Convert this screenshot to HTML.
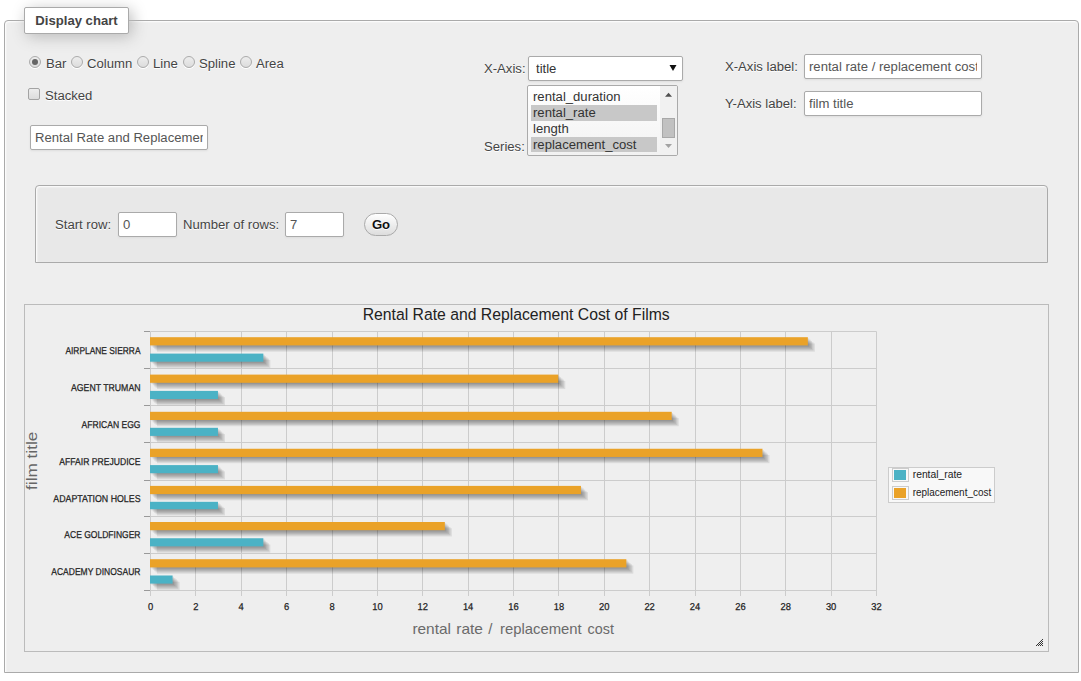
<!DOCTYPE html>
<html lang="en">
<head>
<meta charset="utf-8">
<title>Display chart</title>
<style>
html,body{margin:0;padding:0;background:#fff;}
body{width:1081px;height:681px;position:relative;overflow:hidden;font-family:"Liberation Sans",Arial,sans-serif;font-size:13.12px;color:#444;}
.a{position:absolute;white-space:nowrap;}
.fs{left:4px;top:20px;width:1073px;height:651px;border:1px solid #aaa;border-radius:4px 4px 0 0;background:#eee;box-shadow:inset 1px 1px 2px #fff;}
.lg{left:24px;top:7px;width:103px;height:25px;border:1px solid #aaa;border-radius:2px;background:#fff;box-shadow:3px 3px 15px #bbb;font-weight:bold;line-height:25px;text-align:center;color:#444;}
.t{line-height:16px;height:16px;text-shadow:0 1px 0 #fff;}
.inp{box-sizing:border-box;height:24px;border:1px solid #aaa;border-radius:2px;background:#fff;color:#555;line-height:22px;padding:0 4px;box-shadow:0 1px 2px #ddd;}
.inp>span{display:block;overflow:hidden;white-space:nowrap;height:100%;}
.radio{box-sizing:border-box;width:12px;height:12px;border-radius:50%;border:1px solid #ababab;background:linear-gradient(#ededed,#dcdcdc);box-shadow:0 1px 0 #fff;}
.radio.on::after{content:"";position:absolute;left:2px;top:2px;width:6px;height:6px;border-radius:50%;background:#666;}
.cb{box-sizing:border-box;width:12px;height:12px;border-radius:2px;border:1px solid #a3a3a3;background:linear-gradient(#ededed,#dcdcdc);}
.ifs{left:35px;top:185px;width:1011px;height:76px;border:1px solid #aaa;border-radius:4px 4px 0 0;background:#e8e8e8;box-shadow:inset 1px 1px 2px #fff;}
.go{box-sizing:border-box;left:364px;top:213px;width:34px;height:23px;border:1px solid #aaa;border-radius:12px;background:linear-gradient(#fff,#ddd);color:#111;font-weight:bold;text-align:center;line-height:21px;text-shadow:0 1px 0 #fff;}
.cc{left:24px;top:304px;width:1023px;height:346px;border:1px solid #bbb;}
.chart{position:absolute;left:0;top:0;font-family:"Liberation Sans",Arial,sans-serif;}
.list{box-sizing:border-box;left:527px;top:85px;width:151px;height:71px;border:1px solid #aaa;border-radius:2px;background:linear-gradient(#fff,#f2f2f2);overflow:hidden;color:#333;}
.opt{position:absolute;left:3px;width:126px;height:16px;line-height:16px;padding-left:2px;box-sizing:border-box;}
.opt.sel{background:#c8c8c8;}
</style>
</head>
<body>
<div class="a fs"></div>
<div class="a lg">Display chart</div>

<div class="a radio on" style="left:29px;top:56px"></div><div class="a t" style="left:46px;top:56px">Bar</div>
<div class="a radio" style="left:71px;top:56px"></div><div class="a t" style="left:87px;top:56px">Column</div>
<div class="a radio" style="left:137px;top:56px"></div><div class="a t" style="left:153px;top:56px">Line</div>
<div class="a radio" style="left:183px;top:56px"></div><div class="a t" style="left:199px;top:56px">Spline</div>
<div class="a radio" style="left:240px;top:56px"></div><div class="a t" style="left:256px;top:56px">Area</div>

<div class="a cb" style="left:28px;top:88px"></div><div class="a t" style="left:45px;top:88px">Stacked</div>

<div class="a inp" style="left:30px;top:125px;width:178px;height:25px;line-height:23px"><span>Rental Rate and Replacement Cost of Films</span></div>

<div class="a t" style="left:484px;top:61px">X-Axis:</div>
<div class="a inp" style="left:528px;top:56px;width:155px;height:25px;line-height:23px;padding-left:7px;color:#333"><span>title</span></div>
<svg class="a" style="left:669px;top:65px" width="8" height="6" viewBox="0 0 8 6"><path d="M0.5 0H7.5L4 6Z" fill="#111"/></svg>

<div class="a list">
 <div class="opt" style="top:3px">rental_duration</div>
 <div class="opt sel" style="top:19px">rental_rate</div>
 <div class="opt" style="top:35px">length</div>
 <div class="opt sel" style="top:51px;height:15px">replacement_cost</div>
 <div class="a" style="left:132px;top:0;width:17px;height:69px;background:#f1f1f1"></div>
 <svg class="a" style="left:132px;top:0" width="17" height="69" viewBox="0 0 17 69">
  <path d="M5 10.8H12L8.5 6.8Z" fill="#505050"/>
  <rect x="2.5" y="32.5" width="12" height="19" fill="#c1c1c1" stroke="#a8a8a8" stroke-width="1"/>
  <path d="M5 58H12L8.5 62Z" fill="#a3a3a3"/>
 </svg>
</div>
<div class="a t" style="left:484px;top:139px">Series:</div>

<div class="a t" style="left:725px;top:59px">X-Axis label:</div>
<div class="a inp" style="left:804px;top:54px;width:178px;height:25px;line-height:23px"><span>rental rate / replacement cost</span></div>
<div class="a t" style="left:725px;top:96px">Y-Axis label:</div>
<div class="a inp" style="left:804px;top:91px;width:178px;height:25px;line-height:23px"><span>film title</span></div>

<div class="a ifs"></div>
<div class="a t" style="left:55px;top:217px">Start row:</div>
<div class="a inp" style="left:118px;top:212px;width:59px;height:25px;line-height:23px"><span>0</span></div>
<div class="a t" style="left:183px;top:217px">Number of rows:</div>
<div class="a inp" style="left:285px;top:212px;width:59px;height:25px;line-height:23px"><span>7</span></div>
<div class="a go">Go</div>

<div class="a cc">
<svg class="chart" width="1023" height="346" viewBox="0 0 1023 346">
<rect x="125.5" y="26.5" width="726.0" height="259.0" fill="#efefef"/>
<path d="M125.50 26.5V291.0M170.50 26.5V291.0M216.50 26.5V291.0M261.50 26.5V291.0M307.50 26.5V291.0M352.50 26.5V291.0M397.50 26.5V291.0M443.50 26.5V291.0M488.50 26.5V291.0M533.50 26.5V291.0M579.50 26.5V291.0M624.50 26.5V291.0M670.50 26.5V291.0M715.50 26.5V291.0M760.50 26.5V291.0M806.50 26.5V291.0M851.50 26.5V291.0M125.5 26.5H851.5M125.5 63.5H851.5M125.5 100.5H851.5M125.5 137.5H851.5M125.5 175.5H851.5M125.5 211.5H851.5M125.5 248.5H851.5M125.5 285.5H851.5" stroke="#cccccc" stroke-width="1" fill="none"/>
<path d="M119 26.5H125M119 63.5H125M119 100.5H125M119 137.5H125M119 175.5H125M119 211.5H125M119 248.5H125M119 285.5H125" stroke="#999999" stroke-width="1" fill="none"/>
<g fill="#000" fill-opacity="0.085"><rect x="126.40" y="33.45" width="657.84" height="8.2"/><rect x="127.80" y="34.70" width="657.84" height="8.2"/><rect x="129.20" y="35.95" width="657.84" height="8.2"/><rect x="130.60" y="37.20" width="657.84" height="8.2"/><rect x="132.00" y="38.45" width="657.84" height="8.2"/><rect x="126.40" y="49.85" width="113.34" height="8.1"/><rect x="127.80" y="51.10" width="113.34" height="8.1"/><rect x="129.20" y="52.35" width="113.34" height="8.1"/><rect x="130.60" y="53.60" width="113.34" height="8.1"/><rect x="132.00" y="54.85" width="113.34" height="8.1"/><rect x="126.40" y="70.85" width="408.27" height="8.2"/><rect x="127.80" y="72.10" width="408.27" height="8.2"/><rect x="129.20" y="73.35" width="408.27" height="8.2"/><rect x="130.60" y="74.60" width="408.27" height="8.2"/><rect x="132.00" y="75.85" width="408.27" height="8.2"/><rect x="126.40" y="87.15" width="67.96" height="8.1"/><rect x="127.80" y="88.40" width="67.96" height="8.1"/><rect x="129.20" y="89.65" width="67.96" height="8.1"/><rect x="130.60" y="90.90" width="67.96" height="8.1"/><rect x="132.00" y="92.15" width="67.96" height="8.1"/><rect x="126.40" y="108.05" width="521.71" height="8.2"/><rect x="127.80" y="109.30" width="521.71" height="8.2"/><rect x="129.20" y="110.55" width="521.71" height="8.2"/><rect x="130.60" y="111.80" width="521.71" height="8.2"/><rect x="132.00" y="113.05" width="521.71" height="8.2"/><rect x="126.40" y="124.05" width="67.96" height="8.1"/><rect x="127.80" y="125.30" width="67.96" height="8.1"/><rect x="129.20" y="126.55" width="67.96" height="8.1"/><rect x="130.60" y="127.80" width="67.96" height="8.1"/><rect x="132.00" y="129.05" width="67.96" height="8.1"/><rect x="126.40" y="145.00" width="612.46" height="8.2"/><rect x="127.80" y="146.25" width="612.46" height="8.2"/><rect x="129.20" y="147.50" width="612.46" height="8.2"/><rect x="130.60" y="148.75" width="612.46" height="8.2"/><rect x="132.00" y="150.00" width="612.46" height="8.2"/><rect x="126.40" y="161.35" width="67.96" height="8.1"/><rect x="127.80" y="162.60" width="67.96" height="8.1"/><rect x="129.20" y="163.85" width="67.96" height="8.1"/><rect x="130.60" y="165.10" width="67.96" height="8.1"/><rect x="132.00" y="166.35" width="67.96" height="8.1"/><rect x="126.40" y="182.15" width="430.96" height="8.2"/><rect x="127.80" y="183.40" width="430.96" height="8.2"/><rect x="129.20" y="184.65" width="430.96" height="8.2"/><rect x="130.60" y="185.90" width="430.96" height="8.2"/><rect x="132.00" y="187.15" width="430.96" height="8.2"/><rect x="126.40" y="198.05" width="67.96" height="7.4"/><rect x="127.80" y="199.30" width="67.96" height="7.4"/><rect x="129.20" y="200.55" width="67.96" height="7.4"/><rect x="130.60" y="201.80" width="67.96" height="7.4"/><rect x="132.00" y="203.05" width="67.96" height="7.4"/><rect x="126.40" y="218.25" width="294.84" height="8.2"/><rect x="127.80" y="219.50" width="294.84" height="8.2"/><rect x="129.20" y="220.75" width="294.84" height="8.2"/><rect x="130.60" y="222.00" width="294.84" height="8.2"/><rect x="132.00" y="223.25" width="294.84" height="8.2"/><rect x="126.40" y="234.50" width="113.34" height="8.1"/><rect x="127.80" y="235.75" width="113.34" height="8.1"/><rect x="129.20" y="237.00" width="113.34" height="8.1"/><rect x="130.60" y="238.25" width="113.34" height="8.1"/><rect x="132.00" y="239.50" width="113.34" height="8.1"/><rect x="126.40" y="255.45" width="476.34" height="8.2"/><rect x="127.80" y="256.70" width="476.34" height="8.2"/><rect x="129.20" y="257.95" width="476.34" height="8.2"/><rect x="130.60" y="259.20" width="476.34" height="8.2"/><rect x="132.00" y="260.45" width="476.34" height="8.2"/><rect x="126.40" y="271.75" width="22.59" height="8.1"/><rect x="127.80" y="273.00" width="22.59" height="8.1"/><rect x="129.20" y="274.25" width="22.59" height="8.1"/><rect x="130.60" y="275.50" width="22.59" height="8.1"/><rect x="132.00" y="276.75" width="22.59" height="8.1"/></g>
<rect x="125.00" y="32.20" width="657.84" height="8.2" fill="#EAA228"/><rect x="125.00" y="48.60" width="113.34" height="8.1" fill="#4BB2C5"/><rect x="125.00" y="69.60" width="408.27" height="8.2" fill="#EAA228"/><rect x="125.00" y="85.90" width="67.96" height="8.1" fill="#4BB2C5"/><rect x="125.00" y="106.80" width="521.71" height="8.2" fill="#EAA228"/><rect x="125.00" y="122.80" width="67.96" height="8.1" fill="#4BB2C5"/><rect x="125.00" y="143.75" width="612.46" height="8.2" fill="#EAA228"/><rect x="125.00" y="160.10" width="67.96" height="8.1" fill="#4BB2C5"/><rect x="125.00" y="180.90" width="430.96" height="8.2" fill="#EAA228"/><rect x="125.00" y="196.80" width="67.96" height="7.4" fill="#4BB2C5"/><rect x="125.00" y="217.00" width="294.84" height="8.2" fill="#EAA228"/><rect x="125.00" y="233.25" width="113.34" height="8.1" fill="#4BB2C5"/><rect x="125.00" y="254.20" width="476.34" height="8.2" fill="#EAA228"/><rect x="125.00" y="270.50" width="22.59" height="8.1" fill="#4BB2C5"/>
<g font-size="10" fill="#222" text-anchor="start" text-rendering="geometricPrecision" stroke="#222" stroke-width="0.25">
<text x="40.4" y="49.0" textLength="75.1" lengthAdjust="spacingAndGlyphs">AIRPLANE SIERRA</text>
<text x="46.0" y="85.8" textLength="69.5" lengthAdjust="spacingAndGlyphs">AGENT TRUMAN</text>
<text x="56.6" y="122.8" textLength="58.9" lengthAdjust="spacingAndGlyphs">AFRICAN EGG</text>
<text x="34.3" y="159.9" textLength="81.2" lengthAdjust="spacingAndGlyphs">AFFAIR PREJUDICE</text>
<text x="28.3" y="196.7" textLength="87.2" lengthAdjust="spacingAndGlyphs">ADAPTATION HOLES</text>
<text x="39.3" y="233.0" textLength="76.2" lengthAdjust="spacingAndGlyphs">ACE GOLDFINGER</text>
<text x="26.3" y="269.8" textLength="89.2" lengthAdjust="spacingAndGlyphs">ACADEMY DINOSAUR</text>
</g>
<g font-size="10" fill="#222" text-anchor="middle" text-rendering="geometricPrecision" stroke="#222" stroke-width="0.25">
<text x="125.5" y="305.0" textLength="5.2" lengthAdjust="spacingAndGlyphs">0</text>
<text x="170.9" y="305.0" textLength="5.2" lengthAdjust="spacingAndGlyphs">2</text>
<text x="216.2" y="305.0" textLength="5.2" lengthAdjust="spacingAndGlyphs">4</text>
<text x="261.6" y="305.0" textLength="5.2" lengthAdjust="spacingAndGlyphs">6</text>
<text x="307.0" y="305.0" textLength="5.2" lengthAdjust="spacingAndGlyphs">8</text>
<text x="352.4" y="305.0" textLength="10.4" lengthAdjust="spacingAndGlyphs">10</text>
<text x="397.8" y="305.0" textLength="10.4" lengthAdjust="spacingAndGlyphs">12</text>
<text x="443.1" y="305.0" textLength="10.4" lengthAdjust="spacingAndGlyphs">14</text>
<text x="488.5" y="305.0" textLength="10.4" lengthAdjust="spacingAndGlyphs">16</text>
<text x="533.9" y="305.0" textLength="10.4" lengthAdjust="spacingAndGlyphs">18</text>
<text x="579.2" y="305.0" textLength="10.4" lengthAdjust="spacingAndGlyphs">20</text>
<text x="624.6" y="305.0" textLength="10.4" lengthAdjust="spacingAndGlyphs">22</text>
<text x="670.0" y="305.0" textLength="10.4" lengthAdjust="spacingAndGlyphs">24</text>
<text x="715.4" y="305.0" textLength="10.4" lengthAdjust="spacingAndGlyphs">26</text>
<text x="760.8" y="305.0" textLength="10.4" lengthAdjust="spacingAndGlyphs">28</text>
<text x="806.1" y="305.0" textLength="10.4" lengthAdjust="spacingAndGlyphs">30</text>
<text x="851.5" y="305.0" textLength="10.4" lengthAdjust="spacingAndGlyphs">32</text>
</g>
<text x="491.2" y="14.8" font-size="15.74" fill="#222" text-anchor="middle">Rental Rate and Replacement Cost of Films</text>
<text y="328.8" font-size="15" fill="#6a6a6a"><tspan x="387.4" textLength="38.6" lengthAdjust="spacingAndGlyphs">rental</tspan> <tspan x="431.3" textLength="26.7" lengthAdjust="spacingAndGlyphs">rate</tspan> <tspan x="463.3">/</tspan> <tspan x="475.0" textLength="81.7" lengthAdjust="spacingAndGlyphs">replacement</tspan> <tspan x="562.6" textLength="26.3" lengthAdjust="spacingAndGlyphs">cost</tspan></text>
<text transform="translate(12.3 184.9) rotate(-90)" font-size="15" fill="#666" textLength="58.2" lengthAdjust="spacingAndGlyphs">film title</text>
<rect x="863.5" y="162.5" width="106" height="35" fill="#f8f8f8" stroke="#cccccc"/>
<rect x="867.5" y="163.5" width="16" height="13" fill="#f8f8f8" stroke="#cccccc"/>
<rect x="869" y="165.0" width="12" height="10" fill="#4BB2C5"/>
<text x="887.7" y="172.9" font-size="11" fill="#222" textLength="49.4" lengthAdjust="spacingAndGlyphs">rental_rate</text>
<rect x="867.5" y="181.5" width="16" height="13" fill="#f8f8f8" stroke="#cccccc"/>
<rect x="869" y="183.0" width="12" height="10" fill="#EAA228"/>
<text x="887.7" y="190.9" font-size="11" fill="#222" textLength="78.5" lengthAdjust="spacingAndGlyphs">replacement_cost</text>
<g fill="#333">
<rect x="1017" y="334" width="1" height="1"/>
<rect x="1016" y="335" width="1" height="1"/>
<rect x="1015" y="336" width="1" height="1"/>
<rect x="1017" y="336" width="1" height="1"/>
<rect x="1014" y="337" width="1" height="1"/>
<rect x="1016" y="337" width="1" height="1"/>
<rect x="1013" y="338" width="1" height="1"/>
<rect x="1015" y="338" width="1" height="1"/>
<rect x="1017" y="338" width="1" height="1"/>
<rect x="1012" y="339" width="1" height="1"/>
<rect x="1014" y="339" width="1" height="1"/>
<rect x="1016" y="339" width="1" height="1"/>
<rect x="1011" y="340" width="1" height="1"/>
<rect x="1013" y="340" width="1" height="1"/>
<rect x="1015" y="340" width="1" height="1"/>
<rect x="1017" y="340" width="1" height="1"/>
</g>
</svg>
</div>
</body>
</html>
